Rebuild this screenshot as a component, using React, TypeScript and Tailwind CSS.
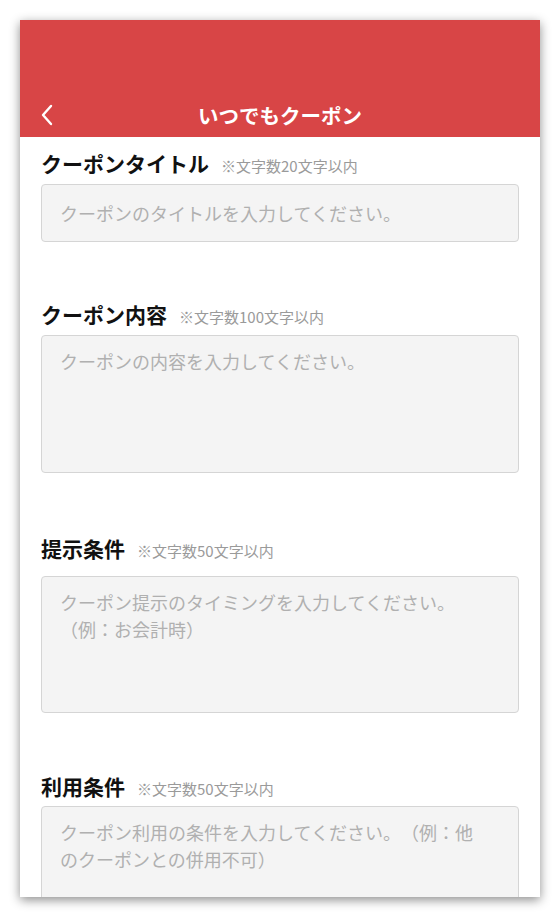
const font = 'font-["Noto_Sans_CJK_JP","Noto_Sans",sans-serif]';

const fields = [
    { label: 'クーポンタイトル', note: '※文字数20文字以内', placeholder: 'クーポンのタイトルを入力してください。', single: true, mt: 'mt-[11px]', gap: 'mt-[6px]', h: 'h-[58px]' },
    { label: 'クーポン内容', note: '※文字数100文字以内', placeholder: 'クーポンの内容を入力してください。', mt: 'mt-[57px]', gap: 'mt-[6px]', h: 'h-[138px]' },
    { label: '提示条件', note: '※文字数50文字以内', placeholder: 'クーポン提示のタイミングを入力してください。（例：お会計時）', mt: 'mt-[60px]', gap: 'mt-[13px]', h: 'h-[137px]' },
    { label: '利用条件', note: '※文字数50文字以内', placeholder: 'クーポン利用の条件を入力してください。（例：他のクーポンとの併用不可）', mt: 'mt-[58px]', gap: 'mt-[5px]', h: 'h-[138px]' },
];

const boxBase =
    'block w-full rounded-[4px] border border-[#d5d5d5] bg-[#f4f4f4] pl-[18px] pr-[30px] text-[18px] leading-[27px] text-[#333] placeholder:text-[#b0b0b0] outline-none [text-spacing-trim:space-all]';

export default function App() {
    return (
        <div className={`h-[918px] w-[560px] bg-white px-[20px] pt-[20px] ${font}`}>
            <div className="flex h-[877px] w-[520px] flex-col overflow-hidden bg-white shadow-[0_3px_10px_rgba(0,0,0,0.45)]">
                {/* Header */}
                <header className="shrink-0 bg-[#d84546] pt-[73px]">
                    <div className="relative flex h-[44px] items-center justify-center">
                        <button className="absolute left-[20px] top-[10px] flex h-[24px] w-[20px] items-center">
                            <svg width="14" height="22" viewBox="0 0 14 22" fill="none">
                                <polyline points="11,2 3,11 11,20" stroke="#fff" strokeWidth="2.4" strokeLinecap="round" strokeLinejoin="round" />
                            </svg>
                        </button>
                        <h1 className="text-[20.5px] font-bold text-white">いつでもクーポン</h1>
                    </div>
                </header>

                {/* Form */}
                <div className="px-[21px]">
                    {fields.map((f) => (
                        <section key={f.label} className={f.mt}>
                            <div className="flex h-[30px] items-baseline gap-[12px] leading-[30px]">
                                <span className="text-[21px] font-bold text-[#111]">{f.label}</span>
                                <span className="text-[15px] text-[#9a9a9a] [text-spacing-trim:space-all]">{f.note}</span>
                            </div>
                            {f.single ? (
                                <input type="text" placeholder={f.placeholder} className={`${boxBase} ${f.gap} ${f.h}`} />
                            ) : (
                                <textarea placeholder={f.placeholder} className={`${boxBase} ${f.gap} ${f.h} resize-none pt-[12px]`} />
                            )}
                        </section>
                    ))}
                </div>
            </div>
        </div>
    );
}
